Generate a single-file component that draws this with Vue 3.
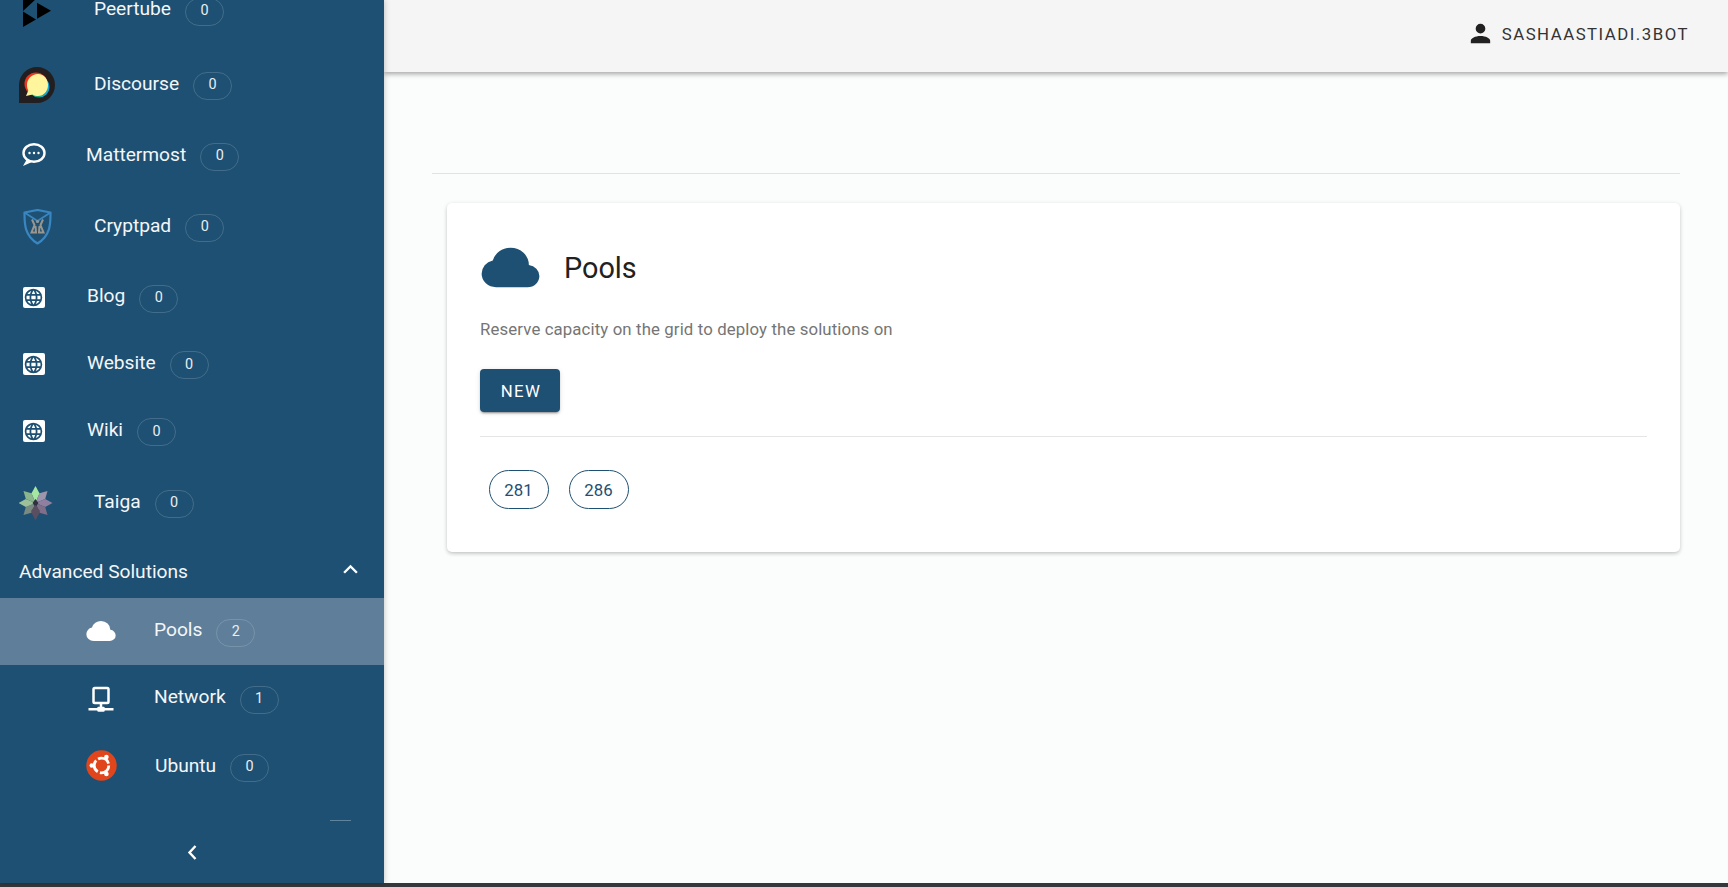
<script setup>
const web = 'M16.36,14C16.44,13.34 16.5,12.68 16.5,12C16.5,11.32 16.44,10.66 16.36,10H19.74C19.9,10.64 20,11.31 20,12C20,12.69 19.9,13.36 19.74,14M14.59,19.56C15.19,18.45 15.65,17.25 15.97,16H18.92C17.96,17.65 16.43,18.93 14.59,19.56M14.34,14H9.66C9.56,13.34 9.5,12.68 9.5,12C9.5,11.32 9.56,10.65 9.66,10H14.34C14.43,10.65 14.5,11.32 14.5,12C14.5,12.68 14.43,13.34 14.34,14M12,19.96C11.17,18.76 10.5,17.43 10.09,16H13.91C13.5,17.43 12.83,18.76 12,19.96M8,8H5.08C6.03,6.34 7.57,5.06 9.4,4.44C8.8,5.55 8.35,6.75 8,8M5.08,16H8C8.35,17.25 8.8,18.45 9.4,19.56C7.57,18.93 6.03,17.65 5.08,16M4.26,14C4.1,13.36 4,12.69 4,12C4,11.31 4.1,10.64 4.26,10H7.64C7.56,10.66 7.5,11.32 7.5,12C7.5,12.68 7.56,13.34 7.64,14M12,4.03C12.83,5.23 13.5,6.57 13.91,8H10.09C10.5,6.57 11.17,5.23 12,4.03M18.92,8H15.97C15.65,6.75 15.19,5.55 14.59,4.44C16.43,5.07 17.96,6.34 18.92,8M12,2C6.47,2 2,6.5 2,12A10,10 0 0,0 12,22A10,10 0 0,0 22,12A10,10 0 0,0 12,2Z'
const cloud = 'M6.5 20Q4.22 20 2.61 18.43 1 16.85 1 14.58 1 12.63 2.17 11.1 3.35 9.57 5.25 9.15 5.88 6.85 7.75 5.43 9.63 4 12 4 14.93 4 16.96 6.04 19 8.07 19 11 20.73 11.2 21.86 12.5 23 13.78 23 15.5 23 17.38 21.69 18.69 20.38 20 18.5 20Z'
const network = 'M15,20A1,1 0 0,0 14,19H13V17H17A2,2 0 0,0 19,15V5A2,2 0 0,0 17,3H7A2,2 0 0,0 5,5V15A2,2 0 0,0 7,17H11V19H10A1,1 0 0,0 9,20H2V22H9A1,1 0 0,0 10,23H14A1,1 0 0,0 15,22H22V20H15M7,15V5H17V15H7Z'
const account = 'M12,4A4,4 0 0,1 16,8A4,4 0 0,1 12,12A4,4 0 0,1 8,8A4,4 0 0,1 12,4M12,14C16.42,14 20,15.79 20,18V20H4V18C4,15.79 7.58,14 12,14Z'

const apps = [
  { name: 'Peertube', count: 0, icon: 'peertube', size: 'tall', wide: true },
  { name: 'Discourse', count: 0, icon: 'discourse', size: 'taller', wide: true },
  { name: 'Mattermost', count: 0, icon: 'mattermost', size: 'short', wide: false },
  { name: 'Cryptpad', count: 0, icon: 'cryptpad', size: 'taller', wide: true },
  { name: 'Blog', count: 0, icon: 'web', size: 'short', wide: false },
  { name: 'Website', count: 0, icon: 'web', size: 'mid', wide: false },
  { name: 'Wiki', count: 0, icon: 'web', size: 'mid', wide: false },
  { name: 'Taiga', count: 0, icon: 'taiga', size: 'taller', wide: true }
]
const advanced = [
  { name: 'Pools', count: 2, icon: 'cloud', active: true },
  { name: 'Network', count: 1, icon: 'network', active: false },
  { name: 'Ubuntu', count: 0, icon: 'ubuntu', active: false }
]
const pools = ['281', '286']
const taigaPetals = [
  { r: 0, c: '#a4e6a2' }, { r: 45, c: '#9d95ac' }, { r: 90, c: '#8f7fa0' }, { r: 135, c: '#7f6f88' },
  { r: 180, c: '#5a4e61' }, { r: 225, c: '#7a8a80' }, { r: 270, c: '#9cc09a' }, { r: 315, c: '#8cb58c' }
]
</script>

<template>
  <div class="page">
    <div class="shell">
      <aside class="sidebar">
        <div class="list">
          <div v-for="a in apps" :key="a.name" class="row" :class="[a.size, a.icon]">
            <span class="ic" :class="{ wide: a.wide }">
              <svg v-if="a.icon === 'peertube'" class="logo" width="36" height="36" viewBox="19 -9 36 36">
                <path d="M23 -9 36 -1 23 11Z M23 11.500 36 19.500 23 27Z M37 2.700 51 10.700 37 18.700Z" fill="#000" />
              </svg>
              <svg v-else-if="a.icon === 'discourse'" class="logo" width="36" height="36" viewBox="0 0 36 36">
                <path d="M18 0C8 0 0 8 0 18V36H18C28 36 36 28 36 18S28 0 18 0Z" fill="#231f20" />
                <circle cx="17" cy="17" r="11.500" fill="#e8371f" />
                <circle cx="20" cy="20" r="10.500" fill="#11a7d8" />
                <circle cx="19" cy="21" r="9" fill="#23a85c" />
                <path d="M19 7C12.500 7 8 12 8 18C8 20 8.500 22 9.300 23.500L7 29L13.500 27.500C15 28.500 17 29 19 29C25 29 29 24 29 18S25 7 19 7Z" fill="#fff59c" />
              </svg>
              <svg v-else-if="a.icon === 'mattermost'" class="logo mm" width="26" height="26" viewBox="0 0 26 26">
                <ellipse cx="13" cy="11" rx="10.500" ry="8.800" fill="none" stroke="#fff" stroke-width="2.400" />
                <path d="M6 17 L2 24 L11 20Z" fill="#fff" />
                <circle cx="8.500" cy="11" r="1.200" fill="#fff" />
                <circle cx="13" cy="11" r="1.200" fill="#fff" />
                <circle cx="17.500" cy="11" r="1.200" fill="#fff" />
              </svg>
              <svg v-else-if="a.icon === 'cryptpad'" class="logo" width="36" height="36" viewBox="-0.5 0 36 36">
                <path d="M5 3.500 18 1 31 3.500 C31 14 31.500 26 18 34.500 C4.500 26 5 14 5 3.500Z" fill="none" stroke="#3a86c0" stroke-width="2.200" stroke-linejoin="round" />
                <path d="M5 3.500 18 12 31 3.500" fill="none" stroke="#3a86c0" stroke-width="1.800" />
                <path d="M12.500 10.500 15 16 12 23.500H16.500L16 17M23.500 10.500 21 16 24 23.500H19.500L20 17" fill="none" stroke="#9a968e" stroke-width="2" />
                <circle cx="18" cy="12.500" r="1.600" fill="#9a968e" />
              </svg>
              <span v-else-if="a.icon === 'web'" class="web-box">
                <svg width="21" height="21" viewBox="0 0 24 24"><path :d="web" fill="#1e5073" /></svg>
              </span>
              <svg v-else-if="a.icon === 'taiga'" class="logo" width="36" height="36" viewBox="1.500 0 36 36">
                <path v-for="p in taigaPetals" :key="p.r" d="M18 18 L14 8.300 L18 1 L22 8.300Z" :fill="p.c" :transform="`rotate(${p.r} 18 18)`" />
                <path d="M18 14 21 18 18 22 15 18Z" fill="#2f3140" />
                <path d="M18 20 22.500 26 18 35 13.500 26Z" fill="#5a4e61" />
              </svg>
            </span>
            <span class="label">{{ a.name }}</span>
            <span class="count">{{ a.count }}</span>
          </div>

          <div class="group">
            <span class="group-title">Advanced Solutions</span>
            <svg class="group-chev" width="29" height="29" viewBox="0 0 24 24"><path d="M7.410,15.410L12,10.830L16.590,15.410L18,14L12,8L6,14L7.410,15.410Z" fill="#fff" /></svg>
          </div>

          <div v-for="a in advanced" :key="a.name" class="row mid sub" :class="[a.icon, { active: a.active }]">
            <span class="ic">
              <svg v-if="a.icon === 'cloud'" class="sub-cloud" width="32" height="30" viewBox="0 0 24 24" preserveAspectRatio="none"><path :d="cloud" fill="#fff" /></svg>
              <svg v-else-if="a.icon === 'network'" class="sub-net" width="30" height="30" viewBox="0 0 24 24"><path :d="network" fill="#fff" /></svg>
              <svg v-else width="31" height="31" viewBox="0 0 31 31">
                <circle cx="15.500" cy="15.500" r="15.200" fill="#e1451b" />
                <circle cx="15.500" cy="15.500" r="7.300" fill="none" stroke="#fff" stroke-width="2.800" stroke-dasharray="13 2.300" />
                <circle cx="5.800" cy="15.500" r="2.300" fill="#fff" />
                <circle cx="20.400" cy="7" r="2.300" fill="#fff" />
                <circle cx="20.400" cy="24" r="2.300" fill="#fff" />
              </svg>
            </span>
            <span class="label">{{ a.name }}</span>
            <span class="count">{{ a.count }}</span>
          </div>
        </div>
        <div class="scroll-mark"></div>
        <div class="collapse">
          <svg width="14" height="18" viewBox="0 0 14 18"><path d="M10.500 3 4.500 9.500 10.500 16" fill="none" stroke="#fff" stroke-width="2.400" /></svg>
        </div>
      </aside>

      <div class="main">
        <header class="topbar">
          <svg width="29" height="29" viewBox="0 0 24 24"><path :d="account" fill="#212121" /></svg>
          <span class="user">SASHAASTIADI.3BOT</span>
        </header>
        <div class="content">
          <div class="rule"></div>
          <section class="card">
            <div class="card-head">
              <svg class="card-cloud" width="63" height="59" viewBox="0 0 24 24" preserveAspectRatio="none"><path :d="cloud" fill="#1e5073" /></svg>
              <h1 class="card-title">Pools</h1>
            </div>
            <p class="card-sub">Reserve capacity on the grid to deploy the solutions on</p>
            <button class="btn">NEW</button>
            <div class="card-rule"></div>
            <div class="chips">
              <span v-for="p in pools" :key="p" class="chip">{{ p }}</span>
            </div>
          </section>
        </div>
      </div>
    </div>
    <div class="strip"></div>
  </div>
</template>

<style scoped>
.page { width: 1728px; height: 887px; display: flex; flex-direction: column; overflow: hidden; font-family: Roboto, "Liberation Sans", sans-serif; }
.shell { flex: 1; display: flex; min-height: 0; }
.strip { height: 4px; background: #35373a; }
.sidebar { position: relative; z-index: 3; width: 384px; flex: none; background: #1e5073; color: #fff; display: flex; flex-direction: column; overflow: hidden; box-shadow: 0 0 6px rgba(0,0,0,.25); }
.list { flex: 1; margin-top: -27px; min-height: 0; }
.row { display: flex; align-items: center; padding-left: 19px; color: #f4f6f8; }
.row.tall { height: 72px; }
.row.taller { height: 76px; }
.row.short { height: 66px; }
.row.mid { height: 67px; }
.ic { width: 68px; flex: none; display: flex; align-items: center; }
.ic.wide { width: 75px; }
.logo { display: block; }
.taller .logo { margin-top: 4px; }
.taller .label { margin-top: 2px; }
.mattermost .label { margin-top: 2px; margin-left: -1px; }
.mm { margin-left: 2px; margin-top: 2px; }
.web-box { width: 21.500px; height: 21.500px; margin-left: 4px; margin-top: 3px; background: #fff; border-radius: 2px; display: flex; align-items: center; justify-content: center; }
.label { font-size: 19.200px; letter-spacing: -.02px; line-height: 24px; }
.count { width: 39px; height: 28px; box-sizing: border-box; margin-left: 14px; margin-top: 5px; border: 1px solid rgba(255,255,255,.16); border-radius: 14px; display: flex; align-items: center; justify-content: center; font-size: 14.400px; line-height: 1; color: #e9eef2; }
.group { height: 59px; display: flex; align-items: center; justify-content: space-between; padding: 5px 19px 0 19px; box-sizing: border-box; }
.group-title { font-size: 19.200px; letter-spacing: -.02px; color: #f4f6f8; }
.group-chev { margin-top: -4px; }
.sub { padding-left: 86px; }
.sub .count { margin-top: 2px; }
.sub .label { margin-top: -3px; }
.ubuntu .label { margin-top: 0; margin-left: 1px; }
.ubuntu .count { margin-top: 4px; }
.active { background: #5e7e99; }
.sub-cloud { margin-left: -1px; margin-top: -1px; }
.sub-net { margin-top: -1px; }
.scroll-mark { position: absolute; left: 330px; top: 820px; width: 21px; height: 1px; background: rgba(255,255,255,.3); }
.collapse { height: 84px; box-sizing: border-box; display: flex; align-items: center; justify-content: center; padding-top: 22px; }
.main { flex: 1; min-width: 0; background: #fbfcfc; display: flex; flex-direction: column; }
.topbar { height: 72px; box-sizing: border-box; flex: none; background: #f5f5f5; box-shadow: 0 2px 5px rgba(0,0,0,.35); display: flex; align-items: center; justify-content: flex-end; padding: 0 39px 6px 0; gap: 7px; position: relative; z-index: 2; }
.user { margin-top: 2px; font-size: 16.800px; letter-spacing: 1.500px; color: #333; }
.content { padding: 101px 48px 0; }
.rule { height: 1px; background: #e0e3e4; }
.card { margin: 29px 0 0 15px; padding: 32px 33px 40px; height: 349px; box-sizing: border-box; background: #fff; border-radius: 5px; box-shadow: 0 2px 4px -1px rgba(0,0,0,.2), 0 1px 5px rgba(0,0,0,.1); }
.card-head { display: flex; align-items: center; height: 63px; }
.card-cloud { margin-left: -1px; margin-top: 2px; }
.card-title { margin: 2px 0 0 22px; font-size: 28.800px; font-weight: 400; color: #212121; }
.card-sub { margin: 19px 0 0; font-size: 16.800px; line-height: 24px; letter-spacing: .12px; color: #757575; }
.btn { display: block; margin-top: 28px; width: 80px; height: 43px; padding: 0 0 0 2px; border: 0; border-radius: 4px; background: #1e5073; color: #fff; font: 400 16.800px Roboto, sans-serif; letter-spacing: 1.300px; box-shadow: 0 3px 1px -2px rgba(0,0,0,.2), 0 2px 2px rgba(0,0,0,.14), 0 1px 5px rgba(0,0,0,.12); }
.card-rule { height: 1px; margin-top: 24px; background: #e3e5e6; }
.chips { display: flex; gap: 20px; margin: 33px 0 0 8.500px; }
.chip { width: 60px; height: 39px; box-sizing: border-box; border: 1px solid #1e5073; border-radius: 20px; display: flex; align-items: center; justify-content: center; font-size: 16.800px; color: #1e5073; }
</style>

<style>
html, body { margin: 0; overflow: hidden; }
</style>
